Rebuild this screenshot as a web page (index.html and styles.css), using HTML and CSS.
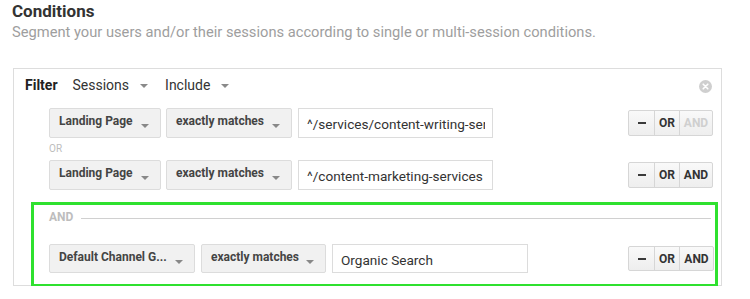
FILE: index.html
```html
<!DOCTYPE html>
<html>
<head>
<meta charset="utf-8">
<link rel="stylesheet" href="styles.css">
</head>
<body>
<div class="header">
  <h1 class="title">Conditions</h1>
  <p class="subtitle">Segment your users and/or their sessions according to single or multi-session conditions.</p>
</div>
<div class="filter-box">
  <div class="filter-head">
    <div class="head-left">
      <span class="filter-label">Filter</span>
      <span class="head-menu">Sessions<span class="caret"></span></span>
      <span class="head-menu">Include<span class="caret"></span></span>
    </div>
    <svg class="close" width="13" height="13" viewBox="0 0 13 13"><circle cx="6.5" cy="6.5" r="6.5" fill="#cfcfcf"/><path d="M4.2 4.2 L8.8 8.8 M8.8 4.2 L4.2 8.8" stroke="#fff" stroke-width="1.6" stroke-linecap="round"/></svg>
  </div>
  <div class="rows">
    <div class="row">
      <div class="select w-lp"><span class="sel-text">Landing Page</span><span class="caret small"></span></div>
      <div class="select w-em"><span class="sel-text">exactly matches</span><span class="caret small"></span></div>
      <div class="input w-in"><span class="in-text">^/services/content-writing-services</span></div>
      <div class="seg">
        <span class="seg-btn minus"><span class="bar"></span></span>
        <span class="seg-btn or">OR</span>
        <span class="seg-btn and disabled">AND</span>
      </div>
    </div>
    <div class="or-label">OR</div>
    <div class="row">
      <div class="select w-lp"><span class="sel-text">Landing Page</span><span class="caret small"></span></div>
      <div class="select w-em"><span class="sel-text">exactly matches</span><span class="caret small"></span></div>
      <div class="input w-in"><span class="in-text">^/content-marketing-services</span></div>
      <div class="seg">
        <span class="seg-btn minus"><span class="bar"></span></span>
        <span class="seg-btn or">OR</span>
        <span class="seg-btn and">AND</span>
      </div>
    </div>
  </div>
  <div class="and-group">
    <div class="and-head"><span class="and-label">AND</span><span class="and-line"></span></div>
    <div class="row row3">
      <div class="select w-dc"><span class="sel-text">Default Channel G...</span><span class="caret small"></span></div>
      <div class="select w-em2"><span class="sel-text">exactly matches</span><span class="caret small"></span></div>
      <div class="input w-in2"><span class="in-text">Organic Search</span></div>
      <div class="seg seg3">
        <span class="seg-btn minus"><span class="bar"></span></span>
        <span class="seg-btn or">OR</span>
        <span class="seg-btn and">AND</span>
      </div>
    </div>
  </div>
</div>
</body>
</html>
```

FILE: styles.css
```css
* { box-sizing: border-box; }
body {
  margin: 0;
  font-family: Roboto, "Liberation Sans", Arial, sans-serif;
  color: #333;
  background: #fff;
}
.header { padding: 0 12px; }
.title {
  margin: 0;
  font-size: 17px;
  line-height: 22px;
  font-weight: 700;
  color: #333;
}
.subtitle {
  margin: 1px 0 0;
  font-size: 14.7px;
  line-height: 18px;
  color: #9e9e9e;
}
.filter-box {
  margin: 27px 0 0 13px;
  width: 709px;
  border: 1px solid #dddddd;
}
.filter-head {
  display: flex;
  justify-content: space-between;
  align-items: center;
  padding: 6px 9px 0 11px;
}
.head-left {
  display: flex;
  align-items: center;
  line-height: 20px;
  font-size: 14px;
}
.filter-label { font-weight: 700; color: #222; margin-right: 15px; }
.head-menu { display: flex; align-items: center; color: #333; margin-right: 17px; }
.caret {
  display: inline-block;
  width: 0; height: 0;
  border-left: 4px solid transparent;
  border-right: 4px solid transparent;
  border-top: 4px solid #8a8a8a;
  margin-left: 11px;
  margin-top: 1px;
}
.close { margin-top: 2px; }
.rows { padding: 13px 0 0 35px; }
.row {
  display: flex;
  align-items: center;
  height: 30px;
  padding-right: 8px;
}
.select {
  display: flex;
  align-items: flex-start;
  height: 30px;
  background: #f1f1f1;
  border: 1px solid #dcdcdc;
  border-radius: 2px;
  padding: 5px 0 0 9px;
  margin-right: 6px;
  font-size: 12px;
  line-height: 14px;
  font-weight: 700;
  color: #444;
  white-space: nowrap;
}
.select .caret.small {
  margin-left: auto;
  margin-right: 11px;
  margin-top: 10px;
  border-top-color: #888;
}
.w-lp { width: 112px; margin-right: 5px; }
.w-em { width: 126px; }
.w-in { width: 195px; }
.w-dc { width: 146px; }
.w-em2 { width: 125px; }
.w-in2 { width: 196px; }
.input {
  height: 30px;
  border: 1px solid #dcdcdc;
  background: #fff;
  padding: 0 7px 0 8px;
  display: flex;
  align-items: center;
  font-size: 13.6px;
  color: #333;
}
.in-text {
  display: block;
  overflow: hidden;
  white-space: nowrap;
  width: 100%;
  padding-top: 2px;
}
.seg {
  margin-left: auto;
  display: flex;
  height: 26px;
  border: 1px solid #d6d6d6;
  border-radius: 2px;
  background: linear-gradient(#f9f9f9, #eeeeee);
}
.seg-btn {
  display: flex;
  align-items: center;
  justify-content: center;
  font-size: 12px;
  font-weight: 700;
  color: #333;
  border-left: 1px solid #d6d6d6;
}
.seg-btn.minus { width: 25px; border-left: 0; }
.bar { display: block; width: 8px; height: 2px; background: #3a3a3a; }
.seg-btn.or { width: 25px; }
.seg-btn.and { width: 33px; }
.seg-btn.disabled { color: #cfcfcf; }
.or-label {
  height: 22px;
  line-height: 22px;
  font-size: 10px;
  color: #bdbdbd;
}
.and-group {
  margin: 12px 3px -2px 17px;
  border: 3px solid #2fe12f;
  padding: 4px 1px 11px 15px;
}
.and-head {
  display: flex;
  align-items: center;
  height: 16px;
  padding-right: 3px;
}
.and-label {
  font-size: 12px;
  font-weight: 700;
  color: #bdbdbd;
  line-height: 16px;
  margin-right: 8px;
}
.and-line {
  flex: 1;
  height: 1px;
  background: #d0d0d0;
  margin-top: 3px;
}
.row3 { margin-top: 19px; height: 29px; padding-right: 0; }
.row3 .select, .row3 .input { height: 29px; }
.seg3 { height: 25px; width: 86px; }
.seg3 .seg-btn.and { width: 34px; }
```
